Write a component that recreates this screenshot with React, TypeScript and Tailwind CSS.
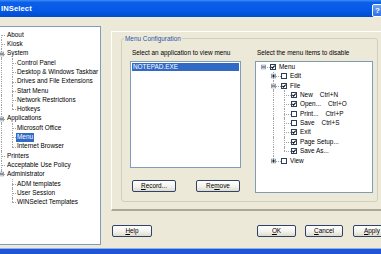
import React from "react";

type Seg = "full" | "up" | "down" | "none";
const segCls: Record<Seg, string> = {
  full: "top-0 bottom-0",
  up: "top-0 h-1/2",
  down: "top-1/2 bottom-0",
  none: "hidden",
};

function Expander({ plus }: { plus?: boolean }) {
  return (
    <svg width="5" height="5" viewBox="0 0 5 5" className="block">
      <rect x="0.5" y="0.5" width="4" height="4" fill="#ffffff" stroke="#8d9db3" />
      <line x1="1" y1="2.5" x2="4" y2="2.5" stroke="#222" />
      {plus && <line x1="2.5" y1="1" x2="2.5" y2="4" stroke="#222" />}
    </svg>
  );
}

function Check({ on }: { on?: boolean }) {
  return (
    <svg width="6" height="6" viewBox="0 0 6 6" className="block shrink-0">
      <rect x="0.5" y="0.5" width="5" height="5" fill="#ffffff" stroke="#2a3f5c" />
      {on && (
        <polyline points="1.4,2.9 2.5,4.1 4.7,1.7" fill="none" stroke="#111" strokeWidth="1.1" />
      )}
    </svg>
  );
}

type LItem = { t: string; l: 0 | 1; root: Seg; child?: Seg; exp?: boolean; sel?: boolean };
const leftItems: LItem[] = [
  { t: "About", l: 0, root: "down" },
  { t: "Kiosk", l: 0, root: "full" },
  { t: "System", l: 0, root: "full", exp: true },
  { t: "Control Panel", l: 1, root: "full", child: "full" },
  { t: "Desktop & Windows Taskbar", l: 1, root: "full", child: "full" },
  { t: "Drives and File Extensions", l: 1, root: "full", child: "full" },
  { t: "Start Menu", l: 1, root: "full", child: "full" },
  { t: "Network Restrictions", l: 1, root: "full", child: "full" },
  { t: "Hotkeys", l: 1, root: "full", child: "up" },
  { t: "Applications", l: 0, root: "full", exp: true },
  { t: "Microsoft Office", l: 1, root: "full", child: "full" },
  { t: "Menu", l: 1, root: "full", child: "full", sel: true },
  { t: "Internet Browser", l: 1, root: "full", child: "up" },
  { t: "Printers", l: 0, root: "full" },
  { t: "Acceptable Use Policy", l: 0, root: "full" },
  { t: "Administrator", l: 0, root: "up", exp: true },
  { t: "ADM templates", l: 1, root: "none", child: "full" },
  { t: "User Session", l: 1, root: "none", child: "full" },
  { t: "WINSelect Templates", l: 1, root: "none", child: "up" },
];

const dot = "absolute w-0 border-l border-dotted border-[#a3a3a3]";
const hdot = "absolute top-1/2 h-0 border-t border-dotted border-[#a3a3a3]";

function LeftRow({ it }: { it: LItem }) {
  return (
    <div className="relative h-[9.3px] flex items-center">
      <div className={`${dot} left-[1px] ${segCls[it.root]}`} />
      {it.l === 1 && it.child && <div className={`${dot} left-[12px] ${segCls[it.child]}`} />}
      {it.l === 0 ? (
        <div className={`${hdot} left-[1px] w-[4px]`} />
      ) : (
        <div className={`${hdot} left-[12px] w-[4px]`} />
      )}
      {it.exp && (
        <div className="absolute left-[-1px] top-1/2 -translate-y-1/2">
          <Expander />
        </div>
      )}
      <span
        className={`${it.l === 0 ? "ml-[6px]" : "ml-[16px]"} px-[1px] leading-[8.5px] whitespace-nowrap ${
          it.sel ? "bg-[#316ac5] text-white" : "text-black"
        }`}
      >
        {it.t}
      </span>
    </div>
  );
}

type RItem = {
  t: string;
  sc?: string;
  l: 0 | 1 | 2;
  on?: boolean;
  exp?: "+" | "-";
  c1?: Seg;
  c2?: Seg;
};
const rightItems: RItem[] = [
  { t: "Menu", l: 0, on: true, exp: "-" },
  { t: "Edit", l: 1, on: false, exp: "+", c1: "full" },
  { t: "File", l: 1, on: true, exp: "-", c1: "full" },
  { t: "New", sc: "Ctrl+N", l: 2, on: true, c1: "full", c2: "full" },
  { t: "Open...", sc: "Ctrl+O", l: 2, on: true, c1: "full", c2: "full" },
  { t: "Print...", sc: "Ctrl+P", l: 2, on: false, c1: "full", c2: "full" },
  { t: "Save", sc: "Ctrl+S", l: 2, on: false, c1: "full", c2: "full" },
  { t: "Exit", l: 2, on: true, c1: "full", c2: "full" },
  { t: "Page Setup...", l: 2, on: true, c1: "full", c2: "full" },
  { t: "Save As...", l: 2, on: true, c1: "full", c2: "up" },
  { t: "View", l: 1, on: false, exp: "+", c1: "up" },
];

const rPad = { 0: "pl-[14px]", 1: "pl-[25px]", 2: "pl-[35px]" } as const;
const rStub = {
  0: "left-[7px] w-[7px]",
  1: "left-[17px] w-[8px]",
  2: "left-[28px] w-[7px]",
} as const;
const rExp = { 0: "left-[5px]", 1: "left-[15px]", 2: "left-[26px]" } as const;

function RightRow({ it }: { it: RItem }) {
  return (
    <div className={`relative h-[9.37px] flex items-center ${rPad[it.l]}`}>
      {it.c1 && <div className={`${dot} left-[17px] ${segCls[it.c1]}`} />}
      {it.c2 && <div className={`${dot} left-[28px] ${segCls[it.c2]}`} />}
      <div className={`${hdot} ${rStub[it.l]}`} />
      {it.exp && (
        <div className={`absolute top-1/2 -translate-y-1/2 ${rExp[it.l]}`}>
          <Expander plus={it.exp === "+"} />
        </div>
      )}
      <Check on={it.on} />
      <span className="ml-[3px] leading-[8px] whitespace-nowrap text-black">{it.t}</span>
      {it.sc && <span className="ml-[7px] leading-[8px] whitespace-nowrap text-black">{it.sc}</span>}
    </div>
  );
}

function Btn({ w, children, cls = "" }: { w: string; children: React.ReactNode; cls?: string }) {
  return (
    <div
      className={`${w} ${cls} h-[12px] shrink-0 rounded-[2px] border border-[#2e4367] bg-[linear-gradient(to_bottom,#ffffff,#f3f2ec_55%,#dedbcf)] flex items-center justify-center text-black leading-none whitespace-nowrap`}
    >
      {children}
    </div>
  );
}

export default function App() {
  return (
    <div className="w-[381px] h-[254px] overflow-hidden bg-[#ece9d8] flex flex-col font-['Liberation_Sans',Arial,sans-serif] text-[6.4px] relative">
      {/* Title bar */}
      <div className="h-[17px] shrink-0 relative bg-[linear-gradient(to_bottom,#3f8cf7_0%,#0b5fe8_14%,#0458e4_65%,#024bcc_100%)]">
        <div className="pl-[1px] pt-[4px] text-white font-bold text-[7.6px] leading-[10px] tracking-[0.1px]">
          INSelect
        </div>
        <div className="absolute left-[372px] top-[4px] w-[14px] h-[13px] rounded-[2px] border border-white bg-[linear-gradient(to_bottom,#6aa2f8,#2f6fe8)] text-white font-bold text-[8px] leading-[11px] pl-[2px]">
          ?
        </div>
      </div>

      {/* Body */}
      <div className="flex-1 flex items-start min-h-0">
        {/* Left tree */}
        <div className="mt-[9px] -ml-[1px] w-[102px] h-[219px] shrink-0 border border-[#7f9db9] bg-white pt-[3.4px] overflow-hidden">
          {leftItems.map((it, i) => (
            <LeftRow key={i} it={it} />
          ))}
        </div>

        {/* Right area */}
        <div className="ml-[10px] w-[280px] shrink-0 flex flex-col">
          <div className="mt-[14px] h-[180px] border-t border-l border-white border-b-2 border-b-[#aca899] shrink-0">
            <div className="ml-[9px] mt-[6px] w-[257px] h-[164px] relative rounded-[3px] border border-[#d0d0bf]">
              <div className="absolute left-[2px] top-[-4.5px] px-[1px] bg-[#ece9d8] text-[#2d55a8] leading-[7px] whitespace-nowrap">
                Menu Configuration
              </div>
              <div className="flex pl-[8px] pt-[9.5px]">
                <div className="w-[111px] flex flex-col shrink-0">
                  <div className="pl-[2px] h-[7px] leading-[7px] whitespace-nowrap text-black">
                    Select an application to view menu
                  </div>
                  <div className="mt-[5.5px] h-[107px] border border-[#7f9db9] bg-white p-[1px]">
                    <div className="h-[8px] bg-[#316ac5] text-white leading-[8px] pl-[1px]">NOTEPAD.EXE</div>
                  </div>
                  <div className="mt-[12px] flex">
                    <Btn w="w-[44px]" cls="ml-[2px]">
                      <span className="underline">R</span>ecord...
                    </Btn>
                    <Btn w="w-[44px]" cls="ml-[20px]">
                      Re<span className="underline">m</span>ove
                    </Btn>
                  </div>
                </div>
                <div className="ml-[14px] w-[118px] flex flex-col shrink-0">
                  <div className="pl-[2px] h-[7px] leading-[7px] whitespace-nowrap text-black">
                    Select the menu items to disable
                  </div>
                  <div className="mt-[5.5px] h-[132px] border border-[#7f9db9] bg-white pt-[0.3px] overflow-hidden">
                    {rightItems.map((it, i) => (
                      <RightRow key={i} it={it} />
                    ))}
                  </div>
                </div>
              </div>
            </div>
          </div>

          {/* Bottom buttons */}
          <div className="mt-[14px] flex">
            <Btn w="w-[40px]" cls="ml-[1px]">
              <span className="underline">H</span>elp
            </Btn>
            <Btn w="w-[39px]" cls="ml-[105px]">
              <span className="underline">O</span>K
            </Btn>
            <Btn w="w-[38px]" cls="ml-[9px]">
              <span className="underline">C</span>ancel
            </Btn>
            <Btn w="w-[38px]" cls="ml-[10px]">
              <span className="underline">A</span>pply
            </Btn>
          </div>
        </div>
      </div>

      {/* Bottom window frame */}
      <div className="h-[6px] shrink-0 bg-[#1f55d6] border-t border-[#8fb0f0]" />
    </div>
  );
}
